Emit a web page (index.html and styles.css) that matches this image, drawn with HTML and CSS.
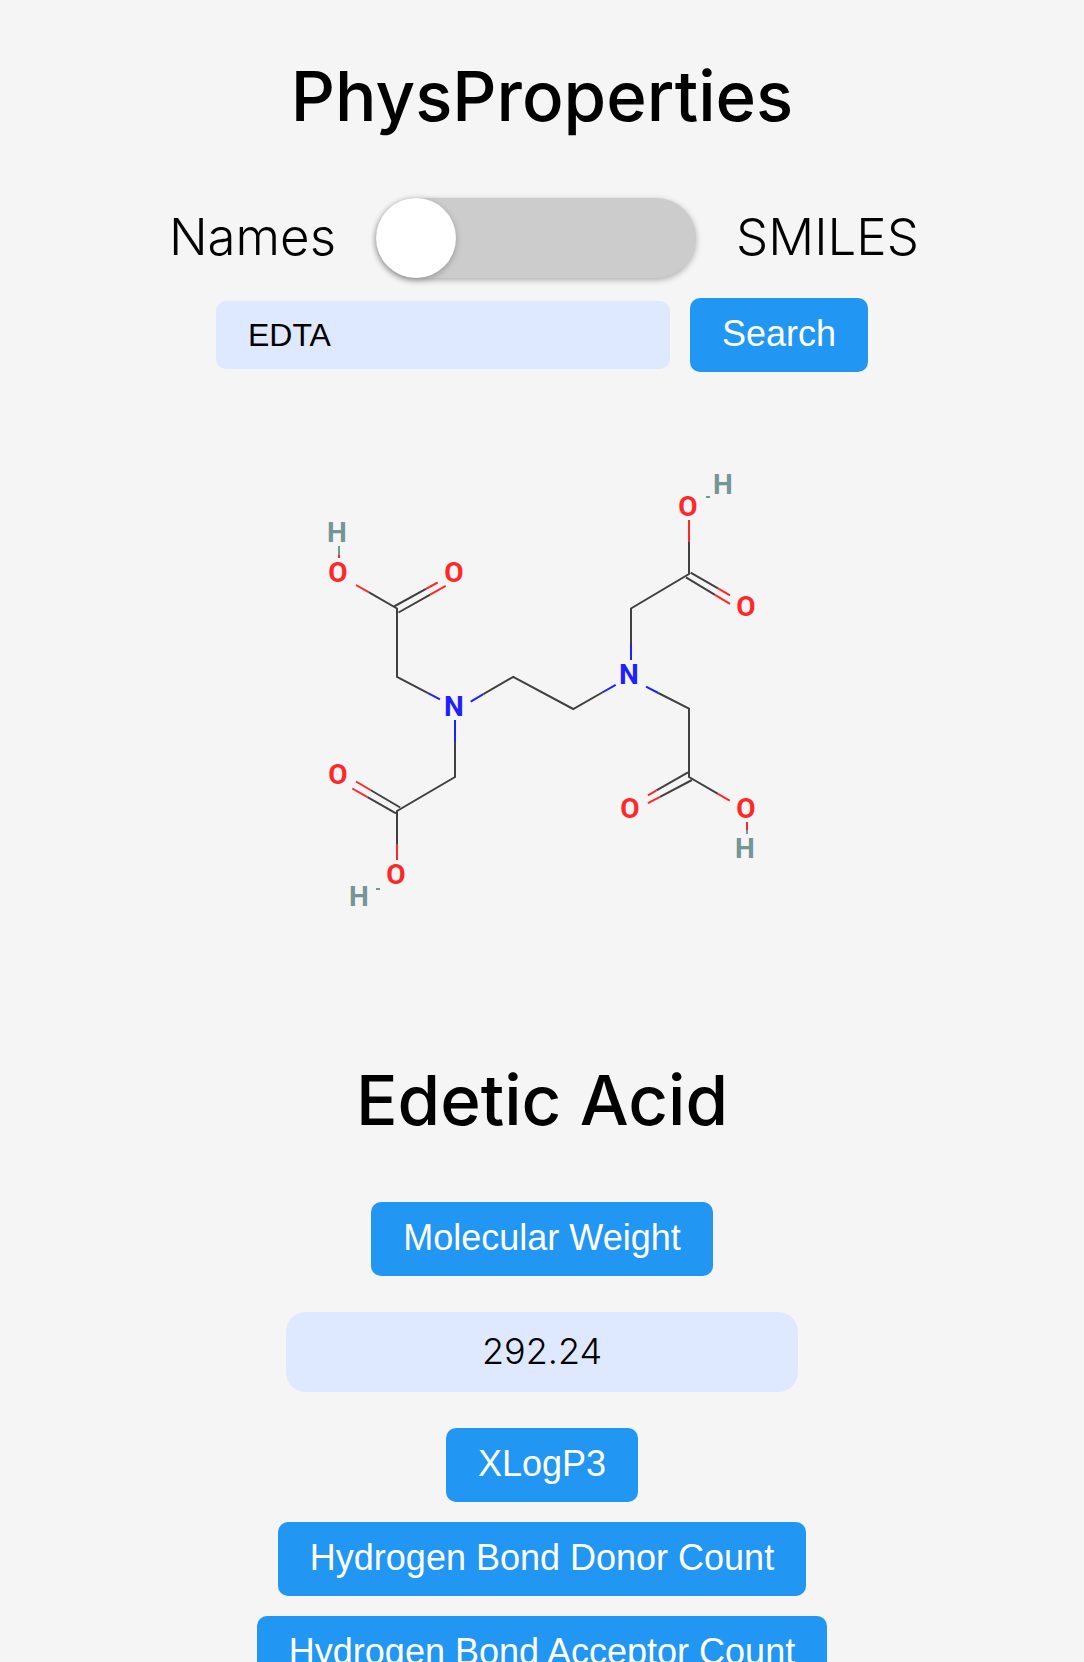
FILE: index.html
```html
<!DOCTYPE html>
<html lang="en">
<head>
  <meta charset="utf-8">
  <meta name="viewport" content="width=device-width, initial-scale=1">
  <title>PhysProperties</title>
  <link rel="stylesheet" href="styles.css">
</head>
<body>
  <main class="page">
    <h1 class="title">PhysProperties</h1>

    <div class="mode">
      <label class="mode-label mode-label-left" for="mode">Names</label>
      <input class="toggle" type="checkbox" id="mode" role="switch">
      <label class="mode-label mode-label-right" for="mode">SMILES</label>
    </div>

    <form class="search">
      <input class="search-input" type="text" value="EDTA" aria-label="Compound">
      <button class="button" type="button">Search</button>
    </form>

    <svg class="molecule" viewBox="0 0 600 600" role="img" aria-label="Structure of edetic acid">
      <g class="bond carbon">
        <path d="M126.6 202.2L155 218.5V287L186 303.1"/>
        <path d="M152 216.5L184 198.9M156.5 222.5L188.2 204.6"/>
        <path d="M241.4 304.2L271.2 286.8L331.2 319L360.2 302.5"/>
        <path d="M213 352V387L155 421V454"/>
        <path d="M158.2 417.5L128.5 400M154 423.3L125.5 407.1"/>
        <path d="M389 254V218.5L447 184V152"/>
        <path d="M448.6 182.6L476 198.4M444 187.3L473 204.8"/>
        <path d="M416.3 303L447 318.7V387L476 403.9"/>
        <path d="M446 382.3L414.5 400.4M450 390L418 406.8"/>
      </g>
      <g class="bond oxygen">
        <path d="M97 165V168M114 195L126.6 202.2M184 198.9L195.7 192.5M188.2 204.6L203.7 195.9"/>
        <path d="M128.5 400L114 391.5M125.5 407.1L110.3 398.5M155 454V470"/>
        <path d="M447 152V130M476 198.4L488 205.3M473 204.8L488 213.9"/>
        <path d="M414.5 400.4L406 405.3M418 406.8L406 413.1M476 403.9L487.7 410.7M505 432V440"/>
      </g>
      <g class="bond nitrogen">
        <path d="M186 303.1L198 309.3M228.7 311.6L241.4 304.2M213 330V352"/>
        <path d="M360.2 302.5L373.7 294.8M404 296.7L416.3 303M389 270V254"/>
      </g>
      <g class="bond hydrogen">
        <path d="M97 156V165M134 499H138M464 107H468M505 440V444"/>
      </g>
      <g class="atom oxygen">
        <text x="96" y="192">O</text>
        <text x="212" y="192">O</text>
        <text x="96" y="394">O</text>
        <text x="154" y="494">O</text>
        <text x="446" y="126">O</text>
        <text x="504" y="226">O</text>
        <text x="388" y="428">O</text>
        <text x="504" y="428">O</text>
      </g>
      <g class="atom nitrogen">
        <text x="212" y="326">N</text>
        <text x="387" y="294">N</text>
      </g>
      <g class="atom hydrogen">
        <text x="95" y="152">H</text>
        <text x="117" y="516">H</text>
        <text x="481" y="104">H</text>
        <text x="503" y="468">H</text>
      </g>
    </svg>

    <h2 class="title">Edetic Acid</h2>

    <section class="properties">
      <button class="button" type="button">Molecular Weight</button>
      <output class="value">292.24</output>
      <button class="button" type="button">XLogP3</button>
      <button class="button" type="button">Hydrogen Bond Donor Count</button>
      <button class="button" type="button">Hydrogen Bond Acceptor Count</button>
    </section>
  </main>
</body>
</html>
```

FILE: styles.css
```css
* {
  box-sizing: border-box;
}

body {
  margin: 0;
  background: #f5f5f5;
  color: #000;
  font-family: Inter, sans-serif;
}

.page {
  display: flex;
  flex-direction: column;
  align-items: center;
  padding: 56px 20px 0;
}

.title {
  margin: 0;
  font-size: 69px;
  font-weight: 500;
  line-height: 80px;
  text-align: center;
}

.mode {
  display: flex;
  align-items: center;
  justify-content: center;
  gap: 40px;
  margin-top: 62px;
}

.mode-label {
  padding-bottom: 2px;
  font-size: 51px;
  font-weight: 300;
  line-height: 60px;
}

.mode-label-left {
  min-width: 172px;
  text-align: right;
}

.mode-label-right {
  min-width: 184px;
}

.toggle {
  appearance: none;
  flex: none;
  width: 320px;
  height: 80px;
  margin: 0;
  border-radius: 40px;
  background: #ccc;
  box-shadow: 0 2px 6px rgba(0, 0, 0, 0.3);
  cursor: pointer;
}

.toggle::before {
  content: "";
  display: block;
  width: 80px;
  height: 80px;
  border-radius: 50%;
  background: #fff;
  box-shadow: 0 2px 6px rgba(0, 0, 0, 0.25);
}

.toggle:checked {
  background: #2196f3;
}

.toggle:checked::before {
  margin-left: auto;
}

.search {
  display: flex;
  align-items: center;
  justify-content: center;
  gap: 20px;
  margin-top: 20px;
}

.search-input {
  width: 454px;
  height: 68px;
  padding: 0 32px;
  border: 0;
  border-radius: 10px;
  background: #dee8ff;
  color: #000;
  font-family: "Liberation Sans", Arial, sans-serif;
  font-size: 32px;
}

.button {
  height: 74px;
  padding: 0 32px 2px;
  border: 0;
  border-radius: 10px;
  background: #2196f3;
  color: #fff;
  font-family: "Liberation Sans", Arial, sans-serif;
  font-size: 36px;
  cursor: pointer;
}

.molecule {
  width: 100%;
  max-width: 600px;
  margin-top: 18px;
}

.bond {
  fill: none;
  stroke: currentColor;
  stroke-width: 2;
}

.atom {
  fill: currentColor;
  font-family: Roboto, sans-serif;
  font-size: 28px;
  font-weight: 700;
  text-anchor: middle;
}

.carbon {
  color: #404040;
}

.oxygen {
  color: #ff2828;
}

.nitrogen {
  color: #2020ff;
}

.hydrogen {
  color: #749696;
}

.molecule + .title {
  margin-top: 70px;
}

.properties {
  display: flex;
  flex-direction: column;
  align-items: center;
  gap: 20px;
  width: 100%;
  margin-top: 62px;
}

.value {
  width: 100%;
  max-width: 512px;
  margin: 16px 0;
  padding-bottom: 2px;
  border-radius: 20px;
  background: #dee8ff;
  font-size: 36px;
  font-weight: 300;
  line-height: 78px;
  text-align: center;
}
```
